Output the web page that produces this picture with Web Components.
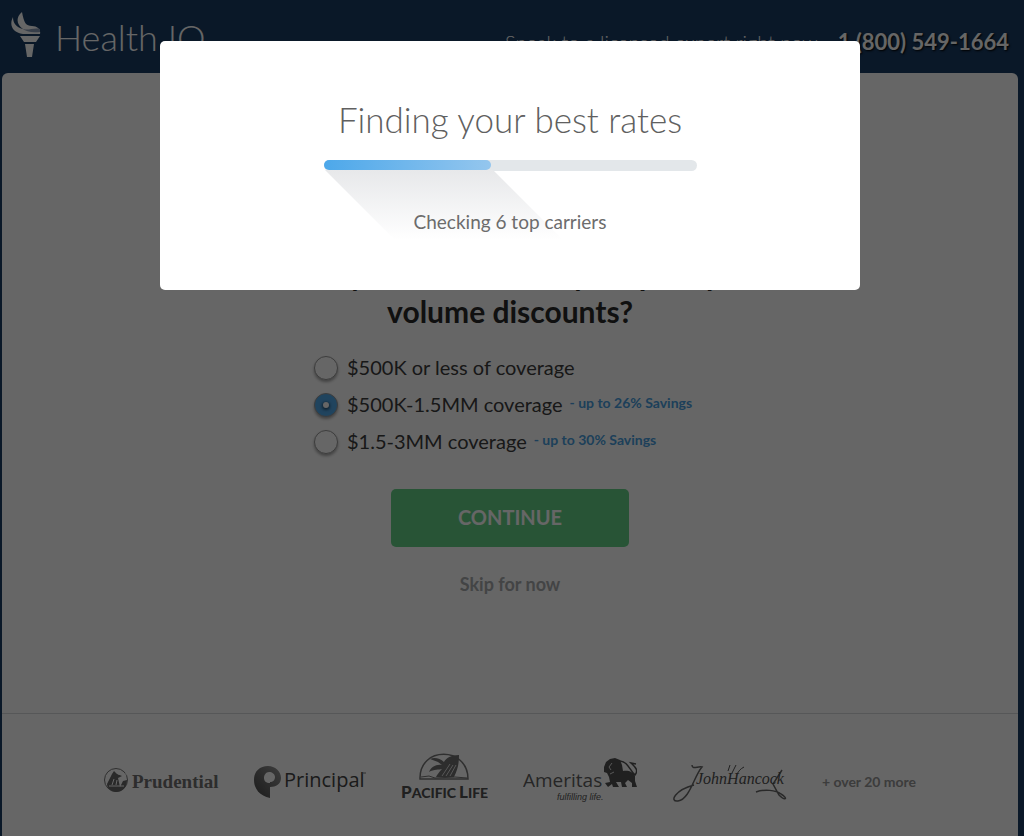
<!DOCTYPE html>
<html lang="en">
<head>
<meta charset="utf-8">
<meta name="viewport" content="width=device-width, initial-scale=1">
<title>Health IQ</title>
<style>
  html {
    height: 100%;
  }

  body {
    margin: 0;
    min-height: 100%;
    display: flex;
    background: #193c64;
    font-family: Lato, 'Open Sans', sans-serif;
  }

  quote-page {
    flex: 1;
  }
</style>
</head>
<body>
<quote-page>
  <site-header slot="header">
    <span slot="note">Speak to a licensed expert right now</span>
    <a slot="phone" href="tel:18005491664">1 (800) 549-1664</a>
  </site-header>
  <coverage-form>Would you like to see if you qualify for volume discounts?</coverage-form>
  <carrier-strip slot="footer">+ over 20 more</carrier-strip>
</quote-page>
<progress-dialog>
  <span slot="title">Finding your best rates</span>
  <span slot="status">Checking 6 top carriers</span>
</progress-dialog>

<script>
const pageTemplate = document.createElement('template');

pageTemplate.innerHTML = `
  <style>
    :host {
      display: flex;
      flex-direction: column;
    }

    main {
      flex: 1;
      display: flex;
      flex-direction: column;
      margin: 0 6px 0 2px;
      border-radius: 6px 6px 0 0;
      background: #fff;
    }

    .content {
      flex: 1;
    }
  </style>
  <slot name="header"></slot>
  <main>
    <div class="content"><slot></slot></div>
    <slot name="footer"></slot>
  </main>
`;

class QuotePage extends HTMLElement {
  connectedCallback() {
    const shadowRoot = this.attachShadow({ mode: 'open' });
    shadowRoot.appendChild(pageTemplate.content.cloneNode(true));
  }
}

const headerTemplate = document.createElement('template');

headerTemplate.innerHTML = `
  <style>
    :host {
      display: block;
      color: #fff;
    }

    header {
      display: flex;
      align-items: center;
      justify-content: space-between;
      height: 73px;
      padding: 0 15px 0 10px;
    }

    .logo {
      display: flex;
      align-items: center;
      gap: 13px;
      color: #fff;
      font-size: 36px;
      line-height: 48px;
      font-weight: 300;
      text-decoration: none;
    }

    .logo svg {
      margin-bottom: 4px;
    }

    .call {
      display: flex;
      align-items: center;
      gap: 20px;
      padding-top: 10px;
      font-size: 20px;
      font-weight: 300;
    }

    ::slotted(a) {
      color: #fff;
      font-size: 22px;
      font-weight: 700;
      text-decoration: none;
      text-shadow: 1px 1px 2px #000;
    }
  </style>
  <header>
    <a class="logo" href="/">
      <svg width="32" height="46" viewBox="0 0 32 46" aria-hidden="true">
        <path fill="#fff" d="M3 5C-1 13 2 20 13 22H30C31 18 28 14 22 14C16 14 14 11 12 0C5 6 7 13 13 17C6 15 3 11 3 5Z"/>
        <path fill="#8c9db8" d="M11 16C17 20 23 15 30 17L30 20C22 21 17 20 11 16Z"/>
        <path fill="#fff" d="M10 24H30L26 30H14ZM15 32H24L22 45H17Z"/>
      </svg>
      <span>Health IQ</span>
    </a>
    <div class="call">
      <slot name="note"></slot>
      <slot name="phone"></slot>
    </div>
  </header>
`;

class SiteHeader extends HTMLElement {
  connectedCallback() {
    const shadowRoot = this.attachShadow({ mode: 'open' });
    shadowRoot.appendChild(headerTemplate.content.cloneNode(true));
  }
}

const formTemplate = document.createElement('template');

formTemplate.innerHTML = `
  <style>
    :host {
      display: block;
      padding: 183px 20px 20px;
      color: #3c3c3c;
    }

    form {
      display: flex;
      flex-direction: column;
      align-items: center;
    }

    h1 {
      margin: 0 0 19px;
      max-width: 560px;
      color: #2a2a2a;
      font-size: 30px;
      line-height: 37px;
      font-weight: 700;
      text-align: center;
    }

    fieldset {
      min-width: 392px;
      margin: 0 0 29px;
      padding: 0;
      border: 0;
    }

    label {
      display: flex;
      align-items: center;
      height: 37px;
      font-size: 20px;
    }

    label span {
      padding-bottom: 2px;
    }

    input {
      appearance: none;
      display: grid;
      place-items: center;
      width: 24px;
      height: 24px;
      margin: 0 9px 0 0;
      border: 1px solid #999;
      border-radius: 50%;
      background: #fff;
      box-shadow: 0 2px 3px rgba(0, 0, 0, .35);
    }

    input:checked {
      background: #52aaec;
    }

    input:checked::before {
      content: '';
      width: 6px;
      height: 6px;
      border-radius: 50%;
      background: #fff;
      box-shadow: 0 1px 3px 1px rgba(0, 0, 0, .5);
    }

    small {
      margin-left: 7px;
      padding-bottom: 4px;
      color: #4a9fe0;
      font-size: 14px;
      font-weight: 700;
    }

    button {
      width: 238px;
      height: 58px;
      padding: 0 0 3px;
      border: 0;
      border-radius: 5px;
      background: #64d288;
      color: #fff;
      font: 700 20px Lato, sans-serif;
    }

    .skip {
      margin-top: 25px;
      color: #a8abad;
      font-size: 18px;
      line-height: 24px;
      font-weight: 700;
      text-decoration: none;
    }
  </style>
  <form>
    <h1><slot></slot></h1>
    <fieldset>
      <label><input type="radio" name="coverage" value="500"><span>$500K or less of coverage</span></label>
      <label><input type="radio" name="coverage" value="1500" checked><span>$500K-1.5MM coverage</span> <small>- up to 26% Savings</small></label>
      <label><input type="radio" name="coverage" value="3000"><span>$1.5-3MM coverage</span> <small>- up to 30% Savings</small></label>
    </fieldset>
    <button type="button">CONTINUE</button>
    <a class="skip" href="#">Skip for now</a>
  </form>
`;

class CoverageForm extends HTMLElement {
  connectedCallback() {
    const shadowRoot = this.attachShadow({ mode: 'open' });
    shadowRoot.appendChild(formTemplate.content.cloneNode(true));
  }
}

const carrierTemplate = document.createElement('template');

carrierTemplate.innerHTML = `
  <style>
    :host {
      display: flex;
      align-items: center;
      justify-content: center;
      gap: 35px;
      height: 122px;
      border-top: 1px solid #d8dadc;
      color: #969696;
      font-size: 14px;
      font-weight: 700;
    }

    svg {
      flex: none;
      font-weight: 400;
    }

    .more {
      padding-top: 12px;
      white-space: nowrap;
    }
  </style>
  <svg width="115" height="60" viewBox="0 0 115 60" role="img" aria-label="Prudential">
    <circle cx="12" cy="35" r="11.5" fill="none" stroke="#777" stroke-width="1"/>
    <path fill="#666" d="M3 39L8 29L10 26L13 29L18 31L14 33L16 42L19 36L23 35C23 43 18 47 12 47C7 47 3 43 3 39Z"/>
    <path fill="none" stroke="#fff" stroke-width="1" d="M5 41H20M10 34L8 40M13 35L12 40M14 29H24"/>
    <text x="28" y="43" font-family="Liberation Serif, serif" font-weight="700" font-size="19" fill="#707070">Prudential</text>
  </svg>
  <svg width="112" height="60" viewBox="0 0 112 60" role="img" aria-label="Principal">
    <defs>
      <linearGradient id="shade" x1="0" y1="1" x2="1" y2="0">
        <stop offset="0" stop-color="#444"/>
        <stop offset="1" stop-color="#999"/>
      </linearGradient>
    </defs>
    <path fill="url(#shade)" d="M16 53C6 51 0 44 0 35C0 26 6 21 14 21C21 21 27 26 27 33C27 39 22 42 16 42V37C19 37 21 35 21 32C21 29 18 27 15 27C12 27 10 30 10 33C10 36 12 38 16 38Z"/>
    <text x="30" y="42" font-family="Open Sans, sans-serif" font-weight="500" font-size="20" fill="#444">Principal</text>
    <path d="M108 28H112" stroke="#777"/>
  </svg>
  <svg width="87" height="60" viewBox="0 0 87 60" role="img" aria-label="Pacific Life">
    <path fill="none" stroke="#777" stroke-width="1.5" d="M19 34C18 1 67 1 67 34Z"/>
    <path fill="#707070" d="M58 10C50 10 45 13 43 17C39 13 33 12 29 14L37 17L41 20C35 19 30 22 28 27C33 24 38 25 41 24C38 27 36 30 35 32H53C57 24 58 18 58 10Z"/>
    <path stroke="#ddd" stroke-width="1" fill="none" d="M41 31L49 19M45 31L52 20M49 31L55 20"/>
    <path stroke="#777" fill="none" d="M20 32L28 31L34 33L54 32L66 33"/>
    <text y="53" font-family="Lato, sans-serif" font-weight="900" fill="#505050" font-size="17">P<tspan font-size="14">ACIFIC</tspan><tspan dx="3">L</tspan><tspan font-size="14">IFE</tspan></text>
  </svg>
  <svg width="114" height="60" viewBox="0 0 114 60" role="img" aria-label="Ameritas">
    <text x="0" y="42" font-family="Open Sans, sans-serif" font-weight="500" font-size="19" fill="#606060">Ameritas</text>
    <text x="34" y="55" font-family="Liberation Sans, sans-serif" font-style="italic" font-size="9" fill="#555">fulfilling life.</text>
    <path fill="#505050" d="M81 22L83 17L87 14L92 13L97 15L99 20L100 26C105 25 111 27 112 31L112 36L114 42L109 42L109 38L105 35L102 38L104 42L99 42L98 37L93 37L96 42L90 42L89 39L85 42L82 38L87 37L86 32L84 28L81 27Z"/>
    <path fill="none" stroke="#ddd" d="M89 18L86 22L88 25M91 27L87 29"/>
    <path fill="none" stroke="#505050" stroke-width="1.5" d="M97 16C105 17 106 24 112 30C116 25 112 22 108 18L113 19"/>
  </svg>
  <svg width="115" height="60" viewBox="0 0 115 60" role="img" aria-label="John Hancock">
    <path fill="none" stroke="#666" stroke-width="1.5" d="M20 20C20 25 26 21 30 22C22 31 18 54 6 56C-3 57 3 45 22 40M84 47C92 44 104 45 109 49C117 54 113 56 107 50L101 39L110 25"/>
    <text x="24" y="39" font-family="Liberation Serif, serif" font-style="italic" font-size="16" fill="#505050">JohnHancock</text>
    <path fill="none" stroke="#555" d="M58 20L56 26M64 20L60 28M72 22C68 24 67 26 65 29"/>
  </svg>
  <span class="more"><slot></slot></span>
`;

class CarrierStrip extends HTMLElement {
  connectedCallback() {
    const shadowRoot = this.attachShadow({ mode: 'open' });
    shadowRoot.appendChild(carrierTemplate.content.cloneNode(true));
  }
}

const dialogTemplate = document.createElement('template');

dialogTemplate.innerHTML = `
  <style>
    /* dims the page and holds the panel near the top */
    :host {
      position: fixed;
      inset: 0;
      display: flex;
      align-items: flex-start;
      justify-content: center;
      padding: 41px 4px 0 0;
      background: rgba(0, 0, 0, .6);
    }

    section {
      display: flex;
      flex-direction: column;
      align-items: center;
      box-sizing: border-box;
      width: 100%;
      max-width: 700px;
      padding: 54px 20px 54px;
      border-radius: 5px;
      background: #fff;
      color: #6c6c6c;
    }

    h2 {
      margin: 0 0 17px;
      color: #606060;
      font-size: 35px;
      line-height: 48px;
      font-weight: 300;
    }

    .bar {
      width: 100%;
      max-width: 373px;
      height: 11px;
      border-radius: 6px;
      background: #e3e7ea;
    }

    .fill {
      position: relative;
      width: 45%;
      height: 10px;
      border-radius: 5px;
      background: linear-gradient(to right, #4da8ea, #94c6ee);
    }

    /* long shadow cast by the filled part */
    .fill::after {
      content: '';
      position: absolute;
      top: 10px;
      left: 1px;
      width: 100%;
      height: 70px;
      background: linear-gradient(#e7e8ea, #fff);
      transform: skewX(45deg);
      transform-origin: top;
    }

    p {
      position: relative;
      margin: 37px 0 0;
      font-size: 19px;
      line-height: 28px;
    }
  </style>
  <section role="dialog" aria-modal="true">
    <h2><slot name="title"></slot></h2>
    <div class="bar" role="progressbar" aria-label="Progress" aria-valuenow="45" aria-valuemin="0" aria-valuemax="100"><div class="fill"></div></div>
    <p><slot name="status"></slot></p>
  </section>
`;

class ProgressDialog extends HTMLElement {
  connectedCallback() {
    const shadowRoot = this.attachShadow({ mode: 'open' });
    shadowRoot.appendChild(dialogTemplate.content.cloneNode(true));
  }
}

customElements.define('quote-page', QuotePage);
customElements.define('site-header', SiteHeader);
customElements.define('coverage-form', CoverageForm);
customElements.define('carrier-strip', CarrierStrip);
customElements.define('progress-dialog', ProgressDialog);
</script>
</body>
</html>
